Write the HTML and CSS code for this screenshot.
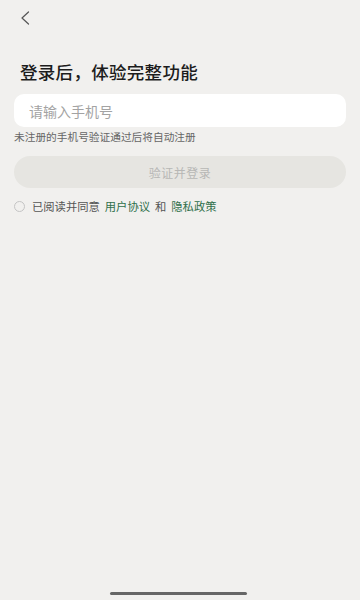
FILE: index.html
```html
<!DOCTYPE html>
<html lang="zh-CN">
<head>
  <meta charset="UTF-8" />
  <meta name="viewport" content="width=device-width, initial-scale=1.0"/>
  <title>登录</title>
  <link rel="stylesheet" href="styles.css">
</head>
<body>
  <div class="page">
    <div class="topbar">
      <svg class="back" width="10" height="14" viewBox="0 0 10 14">
        <path d="M8.5 1 L2 7 L8.5 13" fill="none" stroke="#555" stroke-width="1.2" stroke-linecap="round" stroke-linejoin="round"/>
      </svg>
    </div>

    <h1 class="title">登录后，体验完整功能</h1>

    <input class="phone" type="text" placeholder="请输入手机号" />
    <p class="hint">未注册的手机号验证通过后将自动注册</p>

    <button class="submit" disabled>验证并登录</button>

    <div class="agree">
      <span class="radio"></span>
      <span>已阅读并同意<a class="link">用户协议</a>和<a class="link">隐私政策</a></span>
    </div>
  </div>

  <div class="home-bar"></div>
</body>
</html>
```

FILE: styles.css
```css
* { margin: 0; padding: 0; box-sizing: border-box; }

body {
  background: #f1f0ee;
  color: #222;
  font-family: "Noto Sans CJK SC", "Noto Sans", sans-serif;
  height: 600px;
  overflow: hidden;
}

.page {
  padding: 0 14px;
}

.topbar {
  height: 60px;
  padding: 11px 0 0 6px;
}

.back { display: block; }

.title {
  font-size: 17.5px;
  font-weight: 500;
  line-height: 24px;
  padding-left: 6px;
  color: #1c1c1c;
  letter-spacing: 0.3px;
}

.phone {
  display: block;
  width: 100%;
  height: 33px;
  margin-top: 10px;
  border: none;
  outline: none;
  border-radius: 10px;
  background: #fff;
  padding: 0 15px;
  font-family: inherit;
  font-size: 14px;
  color: #222;
}

.phone::placeholder { color: #a3a3a3; }

.hint {
  margin-top: 3px;
  font-size: 10.7px;
  line-height: 14px;
  color: #666;
}

.submit {
  display: block;
  width: 100%;
  height: 32px;
  margin-top: 12px;
  border: none;
  border-radius: 16px;
  background: #e6e5e1;
  color: #b7b7b5;
  font-family: inherit;
  font-size: 12px;
  letter-spacing: 0.5px;
}

.agree {
  display: flex;
  align-items: center;
  gap: 7px;
  margin-top: 11px;
  font-size: 11.3px;
  line-height: 14px;
  color: #555;
}

.radio {
  width: 11px;
  height: 11px;
  border: 1px solid #c4c4c4;
  border-radius: 50%;
}

.link {
  color: #2f6f4a;
  margin: 0 5px;
}

.home-bar {
  position: absolute;
  left: 110px;
  bottom: 5px;
  width: 137px;
  height: 3px;
  border-radius: 2px;
  background: #666;
}
```
